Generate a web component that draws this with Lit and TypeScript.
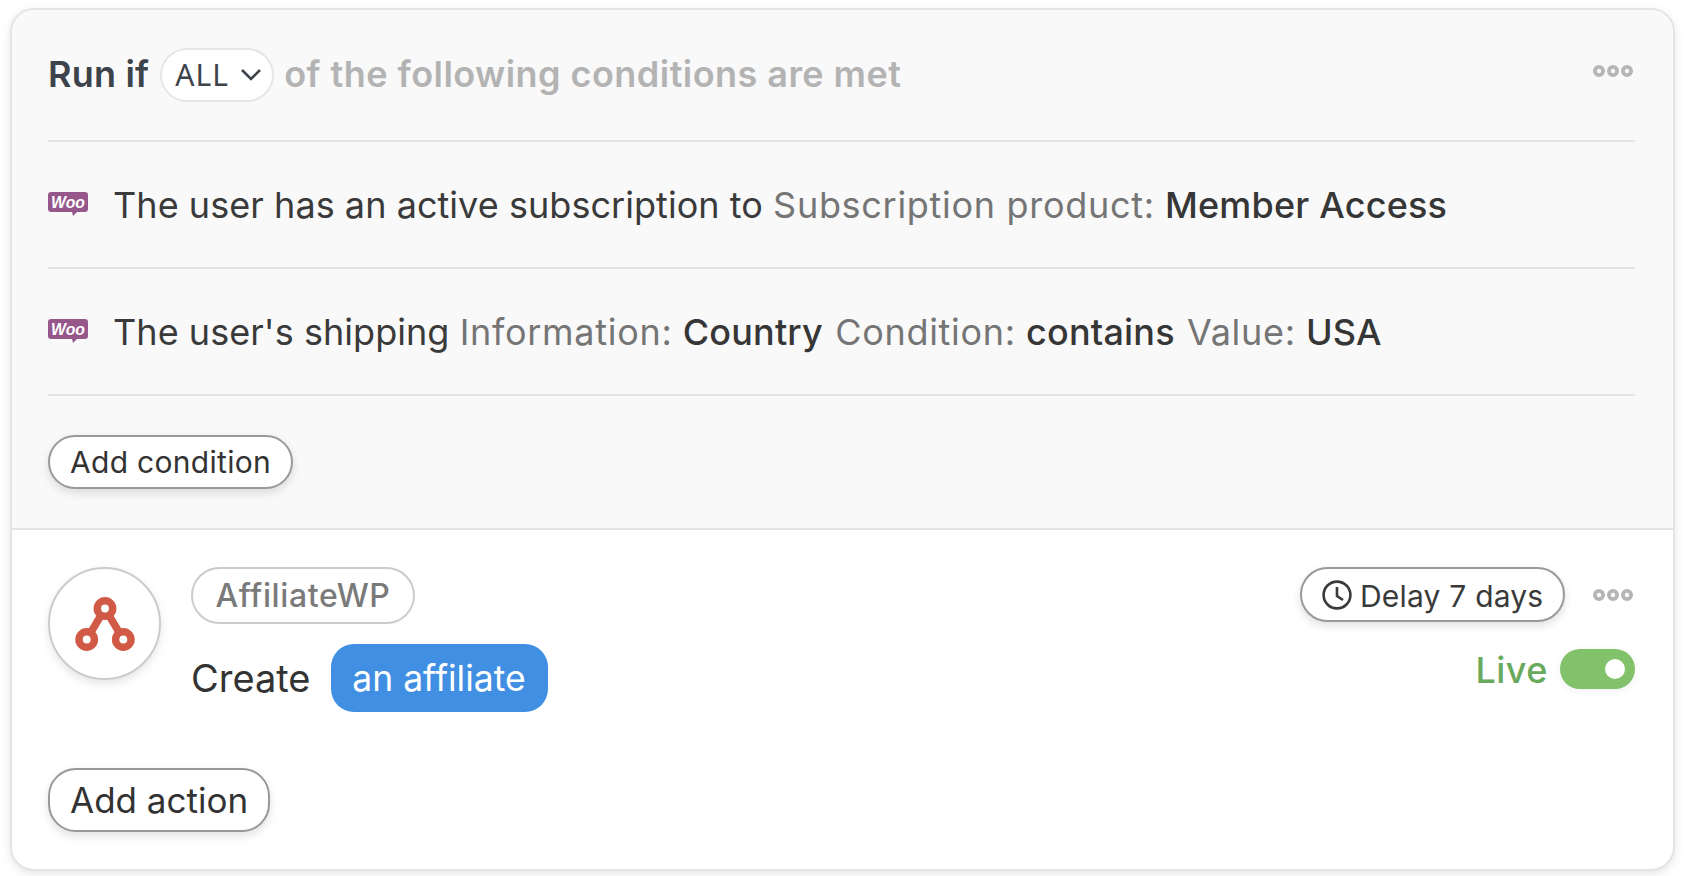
import { LitElement, html, css } from "lit";
import { customElement } from "lit/decorators.js";

const dots = html`<svg class="dots" width="40" height="14" viewBox="0 0 40 14" aria-hidden="true">
  <circle cx="6" cy="7" r="4.1" fill="none" stroke="#b5b5b5" stroke-width="3.8"/>
  <circle cx="20" cy="7" r="4.1" fill="none" stroke="#b5b5b5" stroke-width="3.8"/>
  <circle cx="34" cy="7" r="4.1" fill="none" stroke="#b5b5b5" stroke-width="3.8"/>
</svg>`;

const woo = html`<svg class="woo" width="40" height="25" viewBox="0 0 40 25">
  <path d="M3 0H37a3 3 0 0 1 3 3V17a3 3 0 0 1-3 3H29L25 24 24 20H3a3 3 0 0 1-3-3V3a3 3 0 0 1 3-3Z" fill="#96588a"/>
  <text x="20" y="15.5" text-anchor="middle" fill="#fff" font-family="Liberation Sans, sans-serif" font-size="16" font-weight="700" font-style="italic" textLength="34" lengthAdjust="spacingAndGlyphs">Woo</text>
</svg>`;

@customElement("app-root")
export class AppRoot extends LitElement {
  static styles = css`
    :host {
      display: block;
      box-sizing: border-box;
      width: 1684px;
      height: 876px;
      padding: 8px 9px 0 10px;
      background: #fff;
      font-family: Inter, "Liberation Sans", sans-serif;
      color: #333;
      overflow: hidden;
    }
    .card {
      box-sizing: border-box;
      height: 863px;
      border: 2px solid #e4e4e4;
      border-radius: 24px;
      overflow: hidden;
      box-shadow: 0 3px 10px rgba(0, 0, 0, 0.1);
      display: flex;
      flex-direction: column;
      background: #fff;
    }
    .conditions {
      background: #f9f9f9;
      padding: 0 38px 0 36px;
      border-bottom: 2px solid #e4e4e4;
      height: 520px;
      box-sizing: border-box;
      flex: none;
    }
    .head {
      display: flex;
      align-items: center;
      font-size: 36px;
      font-weight: 600;
      border-bottom: 2px solid #e4e4e4;
      box-sizing: border-box;
      height: 132px;
      padding-bottom: 2px;
    }
    .head .run { color: #3c434a; letter-spacing: 0.2px; }
    .head .rest { color: #b3b3b3; margin-left: 10px; flex: 1; letter-spacing: 0.45px; }
    .head .dots { margin: 0 2px 6px 0; }
    .select {
      box-sizing: border-box;
      height: 54px;
      width: 114px;
      margin: 1px 0 0 11px;
      border: 2px solid #e6e6e6;
      border-radius: 27px;
      background: #fff;
      display: flex;
      align-items: center;
      padding-left: 13px;
      font-size: 30px;
      font-weight: 400;
      color: #3c434a;
      gap: 11px;
    }
    .select .all { font-family: "Noto Sans", sans-serif; letter-spacing: 1px; }
    .row {
      box-sizing: border-box;
      height: 127px;
      display: flex;
      align-items: center;
      border-bottom: 2px solid #e4e4e4;
      font-size: 36px;
      color: #3a3a3a;
      letter-spacing: 0.05px;
    }
    .woo { margin-right: 25px; flex: none; }
    .row span { white-space: pre; }
    .lbl { color: #757575; letter-spacing: 0.7px; }
    .val { font-weight: 500; color: #363636; letter-spacing: 0.2px; margin-right: 2px; }
    .btn {
      box-sizing: border-box;
      display: inline-flex;
      align-items: center;
      border: 2px solid #999;
      background: #fff;
      color: #333;
      box-shadow: 0 4px 10px rgba(0, 0, 0, 0.12);
    }
    .add-cond {
      margin-top: 39px;
      height: 54px;
      width: 245px;
      padding-left: 20px;
      border-radius: 27px;
      font-size: 30px;
      letter-spacing: 0.3px;
    }
    .lower {
      flex: 1;
      padding: 37px 38px 0 36px;
      display: flex;
      flex-direction: column;
    }
    .action { display: flex; height: 163px; flex: none; }
    .avatar {
      box-sizing: border-box;
      width: 113px;
      height: 113px;
      border-radius: 50%;
      border: 2px solid #ccc;
      background: #fff;
      box-shadow: 0 4px 10px rgba(0, 0, 0, 0.1);
      display: flex;
      align-items: center;
      justify-content: center;
      flex: none;
    }
    .main { margin-left: 30px; flex: 1; display: flex; flex-direction: column; align-items: flex-start; }
    .app {
      box-sizing: border-box;
      height: 57px;
      width: 224px;
      border: 2px solid #ccc;
      border-radius: 29px;
      display: flex;
      align-items: center;
      justify-content: center;
      font-size: 32px;
      font-weight: 500;
      color: #7a7a7a;
      letter-spacing: 0.6px;
    }
    .sentence { display: flex; align-items: center; margin-top: 20px; font-size: 38px; color: #333; gap: 20px; }
    .pill {
      box-sizing: border-box;
      height: 68px;
      width: 217px;
      border-radius: 23px;
      background: #418fe3;
      color: #fff;
      display: flex;
      align-items: center;
      justify-content: center;
      font-size: 35.5px;
    }
    .side { display: flex; flex-direction: column; align-items: flex-end; }
    .top { display: flex; align-items: center; gap: 28px; }
    .top .dots { margin-right: 2px; }
    .delay {
      height: 55px;
      width: 265px;
      border-radius: 28px;
      padding-left: 20px;
      gap: 8px;
      font-size: 30px;
      letter-spacing: 0.2px;
      font-weight: 400;
      color: #3a3a3a;
    }
    .delay span { padding-top: 2px; }
    .live { display: flex; align-items: center; gap: 12px; margin-top: 24px; color: #69a95b; font-size: 36px; font-weight: 500; letter-spacing: 0.5px; }
    .live span { padding-top: 2px; }
    .toggle {
      box-sizing: border-box;
      width: 75px;
      height: 40px;
      border-radius: 20px;
      background: #81c26a;
      display: flex;
      align-items: center;
      justify-content: flex-end;
      padding-right: 10px;
      box-shadow: 0 2px 8px rgba(0, 0, 0, 0.06);
    }
    .knob { width: 20px; height: 20px; border-radius: 50%; background: #fff; }
    .add-action {
      margin-top: 38px;
      height: 64px;
      width: 222px;
      padding-left: 20px;
      border-radius: 28px;
      font-size: 35px;
    }
  `;

  render() {
    return html`
      <div class="card">
        <section class="conditions">
          <div class="head">
            <span class="run">Run if</span>
            <div class="select">
              <span class="all">ALL</span>
              <svg width="22" height="13" viewBox="0 0 22 13" aria-hidden="true"><path d="M2 2l9 9 9-9" fill="none" stroke="#3c434a" stroke-width="2.6"/></svg>
            </div>
            <span class="rest">of the following conditions are met</span>
            ${dots}
          </div>
          <div class="row">
            ${woo}
            <span>The user has an active subscription to <span class="lbl">Subscription product:</span> <span class="val">Member Access</span></span>
          </div>
          <div class="row">
            ${woo}
            <span>The user's shipping <span class="lbl">Information:</span> <span class="val">Country</span> <span class="lbl">Condition:</span> <span class="val">contains</span> <span class="lbl">Value:</span> <span class="val">USA</span></span>
          </div>
          <div class="btn add-cond">Add condition</div>
        </section>
        <section class="lower">
          <div class="action">
            <div class="avatar">
              <svg width="62" height="58" viewBox="0 0 62 58" aria-hidden="true">
                <g fill="none" stroke="#d15a46" stroke-width="7.5">
                  <path d="M31 13.5L12.7 44.5M31 13.5L49.3 44.5"/>
                  <g fill="#fff">
                    <circle cx="31" cy="13.5" r="7.7"/>
                    <circle cx="12.7" cy="44.5" r="7.7"/>
                    <circle cx="49.3" cy="44.5" r="7.7"/>
                  </g>
                </g>
              </svg>
            </div>
            <div class="main">
              <div class="app">AffiliateWP</div>
              <div class="sentence"><span>Create</span><span class="pill">an affiliate</span></div>
            </div>
            <div class="side">
              <div class="top">
                <div class="btn delay">
                  <svg width="30" height="30" viewBox="0 0 30 30" aria-hidden="true"><circle cx="15" cy="15" r="13.4" fill="none" stroke="#3a3a3a" stroke-width="2.6"/><path d="M15 7v9l6 4" fill="none" stroke="#3a3a3a" stroke-width="2.6"/></svg>
                  <span>Delay 7 days</span>
                </div>
                ${dots}
              </div>
              <div class="live"><span>Live</span><div class="toggle"><div class="knob"></div></div></div>
            </div>
          </div>
          <div class="btn add-action">Add action</div>
        </section>
      </div>
    `;
  }
}
